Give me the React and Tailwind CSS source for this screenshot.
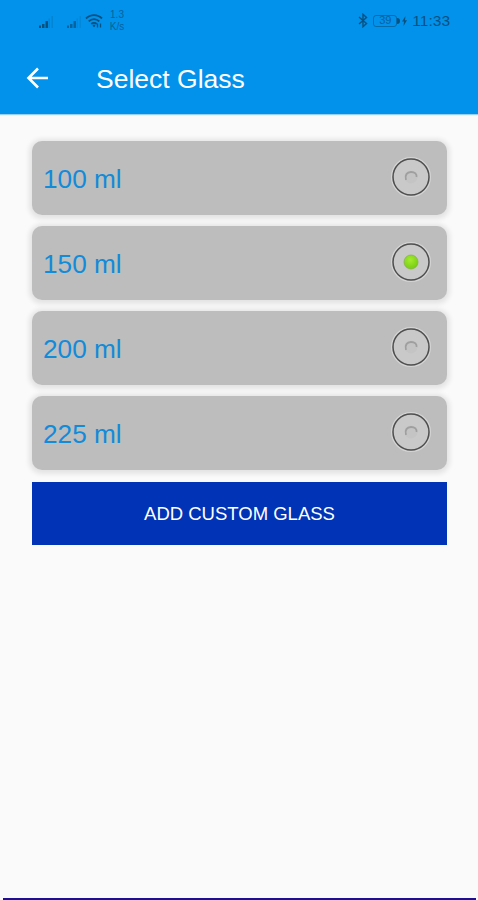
import { useState } from 'react';

const GLASSES = [100, 150, 200, 225];

const SignalIcon = ({ className }) => (
  <svg width="16" height="13" viewBox="0 0 16 13" className={className}>
    <path d="M1 13v-2.500h2V13zM4 13V9h2.500v4zM7.500 13V6H10v7z" fill="currentColor" />
    <path d="M10.500 13V3.500H12V13zM13.500 13V1H15v12z" fill="currentColor" opacity="0.2" />
  </svg>
);

const WifiIcon = () => (
  <svg width="18" height="16" viewBox="0 0 18 16" fill="none" stroke="currentColor" strokeWidth="1.8">
    <path d="M1 5.500c4.500-4.600 11.500-4.600 16 0M3.700 8.300c3-3 7.600-3 10.600 0M6.300 11c1.500-1.500 3.900-1.500 5.400 0" />
    <path d="M9 11.200l1.500 1.500L9 14.200l-1.500-1.500z" fill="currentColor" stroke="none" />
    <path d="M12.500 14.500v-4M15.500 10.500v4" strokeWidth="1.300" />
  </svg>
);

const BluetoothIcon = () => (
  <svg width="10" height="15" viewBox="0 0 10 15" fill="none" stroke="currentColor" strokeWidth="1.4">
    <path d="M1 4l7.500 6.500L5 13.700V1.300l3.500 3.200L1 11" />
  </svg>
);

const BoltIcon = () => (
  <svg width="5" height="10" viewBox="0 0 5 10" fill="currentColor">
    <path d="M3.500 0L0 5.500h2L1.500 10 5 4.300H3z" />
  </svg>
);

const StatusBar = () => (
  <div className="flex h-[41px] items-center pl-[38px] pr-[28px] text-[#07517f]">
    <SignalIcon className="mt-0.5" />
    <SignalIcon className="ml-3 mt-0.5 opacity-70" />
    <div className="ml-[3px]">
      <WifiIcon />
    </div>
    <div className="ml-[6px] w-4 text-center text-[10px] leading-[12px] opacity-75">
      <div className="whitespace-nowrap">1.3</div>
      <div>K/s</div>
    </div>
    <div className="ml-auto flex items-center">
      <BluetoothIcon />
      <div className="ml-[5px] flex h-3 w-6 items-center justify-center rounded-[3px] border border-[#07517f]/60 text-[11px] leading-none">
        <span className="opacity-75">39</span>
      </div>
      <div className="h-1.5 w-[3px] rounded-r-sm bg-current" />
      <div className="ml-0.5">
        <BoltIcon />
      </div>
      <span className="ml-[5px] mt-px text-[15.5px] leading-none">11:33</span>
    </div>
  </div>
);

const Header = () => (
  <div className="flex h-[73px] items-center pl-[26px] text-white">
    <button className="w-[70px]" aria-label="Back">
      <svg width="23" height="22" viewBox="0 0 23 22" fill="none" stroke="currentColor" strokeWidth="2.6">
        <path d="M22 11H3M12 1.500L2.500 11l9.500 9.500" />
      </svg>
    </button>
    <h1 className="mt-[3px] text-[26.5px] leading-8">Select Glass</h1>
  </div>
);

const RadioIcon = ({ checked }) => (
  <svg width="42" height="42" viewBox="0 0 42 42" fill="none">
    <defs>
      <radialGradient id="led" cx="0.45" cy="0.35" r="0.65">
        <stop offset="0" stopColor="#a4ec2e" />
        <stop offset="1" stopColor="#76cc12" />
      </radialGradient>
    </defs>
    <circle cx="21" cy="21" r="19.300" stroke="#d4d4d4" strokeWidth="1.500" />
    <circle cx="21" cy="21" r="18" fill="#c9c9c9" stroke="#4f4f4f" strokeWidth="1.500" />
    {checked ? (
      <circle cx="21" cy="21" r="7" fill="url(#led)" stroke="#88b34d" strokeWidth="0.800" />
    ) : (
      <>
        <circle cx="21" cy="21" r="6.500" fill="#c4c4c4" />
        <path d="M16 24c-1.500-5 1-8 5-8s6 2 5.500 5" stroke="#9f9f9f" strokeWidth="1.800" />
      </>
    )}
  </svg>
);

const GlassCard = ({ size, checked, onSelect }) => (
  <button
    role="radio"
    aria-checked={checked}
    onClick={onSelect}
    className="flex h-[74px] w-full items-center justify-between rounded-[10px] bg-[#bdbdbd] pl-[11px] pr-[15px] shadow-[0_1px_5px_3px_rgba(0,0,0,0.09)]"
  >
    <span className="mt-0.5 text-[26.2px] leading-8 text-[#128bd9]">{size} ml</span>
    <span className="-mt-0.5">
      <RadioIcon checked={checked} />
    </span>
  </button>
);

const App = () => {
  const [selected, setSelected] = useState(150);

  return (
    <div className="flex h-[900px] w-[478px] flex-col overflow-hidden bg-[#fafafa] font-['Liberation_Sans',Arial,sans-serif]">
      <header className="h-[114px] shrink-0 bg-[#0292eb] shadow-[0_1px_1px_rgba(2,146,235,0.4)]">
        <StatusBar />
        <Header />
      </header>

      <main className="flex-1 pl-8 pr-[31px] pt-[27px]">
        <div role="radiogroup" className="flex flex-col gap-[11px]">
          {GLASSES.map((size) => (
            <GlassCard
              key={size}
              size={size}
              checked={selected === size}
              onSelect={() => setSelected(size)}
            />
          ))}
        </div>
        <button className="mt-3 h-[63px] w-full bg-[#0033b5] pt-px text-[18.5px] text-white">
          ADD CUSTOM GLASS
        </button>
      </main>

      {/* Bottom edge of the window */}
      <div className="ml-[3px] mr-0.5 h-0.5 bg-[#1c0f93]" />
    </div>
  );
};

export default App;
